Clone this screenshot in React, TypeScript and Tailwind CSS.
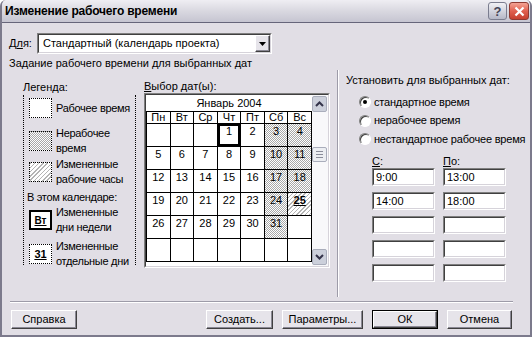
import React from "react";

const dither = "bg-[repeating-conic-gradient(#a8a8a8_0_25%,#ffffff_0_50%)] bg-[length:2px_2px]";
const hatch = "bg-[repeating-linear-gradient(135deg,#b4b4b4_0_1px,#ffffff_1px_3px)]";
const sunken = "border border-t-[#7f7f7f] border-l-[#7f7f7f] border-b-white border-r-white";
const sunkenInner = "border border-t-[#404040] border-l-[#404040] border-b-[#d6d3da] border-r-[#d6d3da]";
const raised = "border border-t-white border-l-white border-b-[#404040] border-r-[#404040] shadow-[inset_-1px_-1px_0_#8a8894]";

const days = ["Пн", "Вт", "Ср", "Чт", "Пт", "Сб", "Вс"];

const weeks: (number | null)[][] = [
    [null, null, null, 1, 2, 3, 4],
    [5, 6, 7, 8, 9, 10, 11],
    [12, 13, 14, 15, 16, 17, 18],
    [19, 20, 21, 22, 23, 24, 25],
    [26, 27, 28, 29, 30, 31, null],
    [null, null, null, null, null, null, null],
];

const Chevron = ({ up }: { up?: boolean }) => (
    <svg width="9" height="6" viewBox="0 0 9 6">
        <path d={up ? "M1 5 L4.5 1.5 L8 5" : "M1 1 L4.5 4.5 L8 1"} fill="none" stroke="#33334a" strokeWidth="2" />
    </svg>
);

const Button = ({ label, def, w }: { label: React.ReactNode; def?: boolean; w: string }) => (
    <div className={`${w} h-[19px] ${def ? "border border-black" : ""}`}>
        <div className={`w-full h-full bg-[#e6e4ea] ${raised} flex items-center justify-center text-[11px]`}>
            {label}
        </div>
    </div>
);

const TimeBox = ({ value }: { value?: string }) => (
    <div className={`w-[63px] h-[18px] ${sunken}`}>
        <div className={`w-full h-full bg-white ${sunkenInner} pl-[2px] text-[11px] leading-[15px]`}>{value}</div>
    </div>
);

const Radio = ({ checked, label }: { checked?: boolean; label: string }) => (
    <div className="flex items-center h-[14px]">
        <div className="w-[12px] h-[12px] shrink-0 rounded-full bg-white border border-t-[#7f7f7f] border-l-[#7f7f7f] border-b-white border-r-white shadow-[inset_1px_1px_0_#404040] flex items-center justify-center">
            {checked && <div className="w-[4px] h-[4px] rounded-full bg-black" />}
        </div>
        <span className="ml-[3px] text-[11px] whitespace-nowrap tracking-[-0.2px]">{label}</span>
    </div>
);

const LegendItem = ({ box, lines, className }: { box: React.ReactNode; lines: string[]; className?: string }) => (
    <div className={`flex items-center ${className ?? ""}`}>
        {box}
        <div className="ml-[4px] text-[11px] leading-[15px] tracking-[-0.3px] whitespace-nowrap">
            {lines.map((l, i) => (
                <div key={i}>{l}</div>
            ))}
        </div>
    </div>
);

export default function App() {
    return (
        <div className="w-[532px] h-[337px] bg-[#e1dee5] text-black font-['Liberation_Sans',Arial,sans-serif] flex flex-col border-x-2 border-b-2 border-[#7c7a8c] rounded-t-[6px] overflow-hidden">
            {/* title bar */}
            <div className="h-[23px] shrink-0 flex items-center justify-between pl-[3px] pr-[1px] bg-gradient-to-b from-[#efeef3] via-[#d9d8e0] to-[#c6c5d1] border-b border-[#66657a]">
                <span className="text-[12px] font-bold tracking-[-0.2px]">Изменение рабочего времени</span>
                <div className="flex gap-[2px]">
                    <div className="w-[19px] h-[18px] rounded-[3px] border border-[#7b7d8f] bg-gradient-to-b from-[#f1f1f5] to-[#b6b8c7] flex items-center justify-center text-[13px] font-bold text-[#444457] leading-none">
                        ?
                    </div>
                    <div className="w-[20px] h-[18px] rounded-[3px] border border-[#8e3a32] bg-gradient-to-b from-[#f3a293] via-[#e0604f] to-[#c6402f] flex items-center justify-center">
                        <svg width="11" height="11" viewBox="0 0 11 11">
                            <path d="M1.5 1.5 L9.5 9.5 M9.5 1.5 L1.5 9.5" stroke="#ffffff" strokeWidth="2.2" />
                        </svg>
                    </div>
                </div>
            </div>

            <div className="flex-1 flex flex-col pl-[7px]">
                {/* Для: */}
                <div className="flex items-center mt-[10px] h-[21px]">
                    <span className="w-[28px] text-[11px]">
                        Д<u>л</u>я:
                    </span>
                    <div className={`w-[235px] h-[21px] ${sunken}`}>
                        <div className={`w-full h-full bg-white ${sunkenInner} flex items-center justify-between`}>
                            <span className="pl-[4px] text-[11px]">Стандартный (календарь проекта)</span>
                            <div className={`w-[15px] h-full bg-[#e6e4ea] ${raised} flex items-center justify-center`}>
                                <svg width="7" height="4" viewBox="0 0 7 4">
                                    <path d="M0 0 H7 L3.5 4 Z" fill="#000" />
                                </svg>
                            </div>
                        </div>
                    </div>
                </div>

                <div className="mt-[3px] h-[13px] text-[11px] leading-[13px]">Задание рабочего времени для выбранных дат</div>

                {/* main area */}
                <div className="flex h-[227px]">
                    {/* legend */}
                    <div className="ml-[14px] mt-[11px] w-[113px] flex flex-col">
                        <div className="h-[13px] text-[11px] leading-[13px]">Легенда:</div>
                        <div className="mt-[1px] h-[170px] border-x border-dotted border-black pl-[5px] pt-[3px] flex flex-col">
                            <LegendItem
                                box={<div className="w-[23px] h-[20px] border border-dotted border-black bg-white shrink-0" />}
                                lines={["Рабочее время"]}
                            />
                            <LegendItem
                                className="mt-[8px]"
                                box={<div className={`w-[23px] h-[20px] border border-dotted border-black shrink-0 ${dither}`} />}
                                lines={["Нерабочее", "время"]}
                            />
                            <LegendItem
                                className="mt-[1px]"
                                box={<div className={`w-[23px] h-[20px] border border-dotted border-black shrink-0 ${hatch}`} />}
                                lines={["Измененные", "рабочие часы"]}
                            />
                            <div className="mt-[4px] -ml-[2px] text-[11px] leading-[13px] tracking-[-0.3px]">В этом календаре:</div>
                            <LegendItem
                                className="mt-[1px]"
                                box={
                                    <div className="w-[23px] h-[20px] border-2 border-black bg-white shrink-0 flex items-center justify-center text-[10px] font-bold underline">
                                        Вт
                                    </div>
                                }
                                lines={["Измененные", "дни недели"]}
                            />
                            <LegendItem
                                className="mt-[4px]"
                                box={
                                    <div className="w-[23px] h-[20px] border border-dotted border-black bg-white shrink-0 flex items-center justify-center text-[11px] font-bold underline">
                                        31
                                    </div>
                                }
                                lines={["Измененные", "отдельные дни"]}
                            />
                        </div>
                    </div>

                    {/* calendar */}
                    <div className="ml-[8px] mt-[10px] flex flex-col">
                        <div className="h-[13px] text-[11px] leading-[13px]">
                            <u>В</u>ыбор дат(ы):
                        </div>
                        <div className={`w-[186px] h-[175px] ${sunken}`}>
                            <div className={`w-full h-full bg-white ${sunkenInner} flex overflow-hidden`}>
                                <div className="w-[166px] flex flex-col">
                                    <div className="h-[16px] text-center text-[11px] leading-[16px]">Январь 2004</div>
                                    <div className="grid grid-cols-7 grid-rows-[11px_repeat(6,22px)] gap-px bg-black border border-black">
                                        {days.map((d) => (
                                            <div key={d} className="bg-white text-center text-[11px] leading-[11px]">
                                                {d}
                                            </div>
                                        ))}
                                        {weeks.flat().map((n, i) => {
                                            const col = i % 7;
                                            let bg = "bg-white";
                                            if (n !== null && col >= 5) bg = n === 25 ? hatch : dither;
                                            return (
                                                <div
                                                    key={i}
                                                    className={`${bg} text-center text-[11px] leading-[13px] pt-[1px] ${n === 1 ? "shadow-[inset_0_0_0_2px_#000]" : ""} ${n === 25 ? "font-bold underline" : ""}`}
                                                >
                                                    {n ?? ""}
                                                </div>
                                            );
                                        })}
                                    </div>
                                </div>
                                <div className="flex-1 flex flex-col items-start py-[1px] bg-[#f8f8fa]">
                                    <div className="w-[15px] h-[16px] rounded-[2px] bg-[#ccd0db] border border-[#a9adbb] flex items-center justify-center">
                                        <Chevron up />
                                    </div>
                                    <div className="h-[35px]" />
                                    <div className="w-[15px] h-[15px] rounded-[2px] bg-[#eceef2] border border-[#a9adbb] flex flex-col items-center justify-center gap-[2px]">
                                        <div className="w-[7px] h-px bg-[#8a8d9a]" />
                                        <div className="w-[7px] h-px bg-[#8a8d9a]" />
                                        <div className="w-[7px] h-px bg-[#8a8d9a]" />
                                    </div>
                                    <div className="flex-1" />
                                    <div className="w-[15px] h-[16px] rounded-[2px] bg-[#ccd0db] border border-[#a9adbb] flex items-center justify-center">
                                        <Chevron />
                                    </div>
                                </div>
                            </div>
                        </div>
                    </div>

                    {/* vertical separator */}
                    <div className="ml-[7px] w-[2px] border-l border-[#9d9ba8] bg-white" />

                    {/* right panel */}
                    <div className="ml-[7px] mt-[4px] flex flex-col">
                        <div className="h-[13px] text-[11px] leading-[13px] whitespace-nowrap">Установить для выбранных дат:</div>
                        <div className="pl-[13px] mt-[8px] flex flex-col gap-[4.5px]">
                            <Radio checked label="стандартное время" />
                            <Radio label="нерабочее время" />
                            <Radio label="нестандартное рабочее время" />
                        </div>
                        <div className="pl-[26px] mt-[9px] flex gap-[8px]">
                            <div className="flex flex-col">
                                <div className="h-[13px] text-[11px] leading-[13px]">
                                    <u>С</u>:
                                </div>
                                <div className="flex flex-col gap-[6px]">
                                    <TimeBox value="9:00" />
                                    <TimeBox value="14:00" />
                                    <TimeBox />
                                    <TimeBox />
                                    <TimeBox />
                                </div>
                            </div>
                            <div className="flex flex-col">
                                <div className="h-[13px] text-[11px] leading-[13px]">
                                    <u>П</u>о:
                                </div>
                                <div className="flex flex-col gap-[6px]">
                                    <TimeBox value="13:00" />
                                    <TimeBox value="18:00" />
                                    <TimeBox />
                                    <TimeBox />
                                    <TimeBox />
                                </div>
                            </div>
                        </div>
                    </div>
                </div>

                {/* bottom separator */}
                <div className="mt-[4px] ml-[1px] w-[503px] h-[2px] border-t border-[#9d9ba8] bg-white" />

                {/* buttons */}
                <div className="mt-[7px] flex items-center">
                    <div className="ml-[2px]">
                        <Button w="w-[66px]" label="Справка" />
                    </div>
                    <div className="ml-[129px] flex gap-[9px]">
                        <Button w="w-[67px]" label="Создать..." />
                        <Button w="w-[81px]" label="Параметры..." />
                        <Button w="w-[66px]" def label="ОК" />
                        <Button w="w-[65px]" label="Отмена" />
                    </div>
                </div>
            </div>
        </div>
    );
}
